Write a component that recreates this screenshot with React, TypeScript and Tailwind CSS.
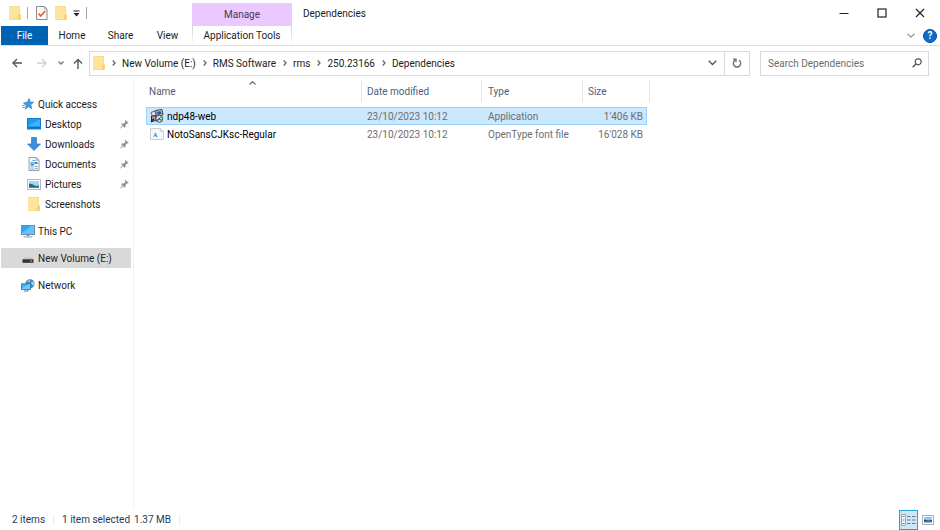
import { ReactNode } from "react";

const FolderIcon = () => (
  <svg width="12" height="14" viewBox="0 0 12 14">
    <path d="M0.5 0.5h10v8h1v5h-11z" fill="#ffe59a" stroke="#f3d47a" strokeWidth="0.8" />
    <path d="M9 9h2.5v4.500H9z" fill="#f6d070" />
    <path d="M1 1v12.4" stroke="#fbe9b0" strokeWidth="1" />
  </svg>
);

const PropertiesIcon = () => (
  <svg width="12" height="14" viewBox="0 0 12 14">
    <path d="M0.5 0.5h8l2.5 2.5v10.500h-10.500z" fill="#fafafa" stroke="#8a8a8a" />
    <path d="M8.500 0.500v2.500H11" fill="none" stroke="#9a9a9a" strokeWidth="0.8" />
    <path d="M2.500 7.500l2.200 2.500 4.500-5" fill="none" stroke="#e8622c" strokeWidth="1.700" />
  </svg>
);

const StarIcon = () => (
  <svg width="12" height="12" viewBox="0 0 12 12">
    <path
      d="M7.200 0.500l.8 3.500 3.700.2-2.900 2.300.9 4.300-3.300-2-3 2.400.8-3.700L1.500 5l3.700-.8z"
      fill="#3d9fe6"
      stroke="#2a83cf"
      strokeWidth="0.7"
    />
    <path d="M0 7.500h2.800M0.500 9.500h2.500" stroke="#5aaeea" strokeWidth="1" />
  </svg>
);

const DesktopIcon = () => (
  <svg width="14" height="12" viewBox="0 0 14 12">
    <rect x="0.5" y="0.5" width="13" height="10.500" fill="#1c9bf0" stroke="#1478c8" />
    <path d="M1 8L13 1v7z" fill="#3fb2fa" />
    <path d="M1 9.800h12" stroke="#1166ad" strokeWidth="1.200" />
  </svg>
);

const DownloadIcon = () => (
  <svg width="14" height="14" viewBox="0 0 14 14">
    <path d="M4.500 0.500h5v6.500h4L7 13.500 0.500 7h4z" fill="#3b8ede" stroke="#2c7acb" strokeWidth="0.7" />
  </svg>
);

const DocumentIcon = () => (
  <svg width="12" height="14" viewBox="0 0 12 14">
    <path d="M1 0.500h7.500L11 3v10.500H1z" fill="#f5f8fa" stroke="#8c9499" strokeWidth="0.9" />
    <path d="M8.300 0.500V3.200H11" fill="none" stroke="#8c9499" strokeWidth="0.8" />
    <path d="M4.500 3.500h3M2.500 5.500h3" stroke="#58a9dc" />
    <path d="M2.500 7.500h3.500M6.500 6h3" stroke="#2b8bd0" strokeWidth="1.800" />
    <path d="M2.500 10h3M6.500 9.500h3.200M2.500 12h3M6.500 11.700h3.200" stroke="#6f9fc0" strokeWidth="0.9" />
  </svg>
);

const PictureIcon = () => (
  <svg width="14" height="11" viewBox="0 0 14 11">
    <rect x="0.5" y="0.5" width="13" height="10" fill="#fff" stroke="#b4b8bb" />
    <rect x="2" y="2" width="10" height="7" fill="#a5d6f6" />
    <path d="M2 4.500q3 0 5 1.500t5 .5V9H2z" fill="#2d6779" />
    <path d="M2 7.800h10V9H2z" fill="#3d86c8" />
  </svg>
);

const ComputerIcon = () => (
  <svg width="14" height="13" viewBox="0 0 14 13">
    <rect x="0.5" y="0.5" width="13" height="9" fill="#2ea7f2" stroke="#6f8795" strokeWidth="0.9" />
    <path d="M1 8L10 1h3v8H1z" fill="#62c4fa" />
    <path d="M5.500 10h3v1.200h-3z" fill="#8b979e" />
    <path d="M2.500 11.900h9" stroke="#7aa9c8" strokeWidth="1.100" />
  </svg>
);

const DriveIcon = () => (
  <svg width="12" height="12" viewBox="0 0 12 12">
    <path d="M2 5.500h8l1.500 2h-11z" fill="#c3c6c8" />
    <rect x="0.500" y="7.300" width="11" height="3.500" fill="#333" />
    <rect x="8" y="8.500" width="2" height="1.100" fill="#45e05c" />
  </svg>
);

const NetworkIcon = () => (
  <svg width="14" height="13" viewBox="0 0 14 13">
    <circle cx="9" cy="4.800" r="4.600" fill="#3f87b5" />
    <path d="M6 2.500q2-2 3.500-1.800l-1 2.500zM10 3l2.500-.5q1 2 .5 4l-2-.5z" fill="#a2d2ec" />
    <rect x="0.500" y="4.800" width="9" height="5.700" fill="#3fb0f3" stroke="#2875a8" strokeWidth="0.8" />
    <path d="M1 9.500L8 5.300h1v4.700H1z" fill="#73cbfa" />
    <path d="M3 12h4.500" stroke="#4d8fb8" strokeWidth="1.200" />
  </svg>
);

const PinIcon = () => (
  <svg width="9" height="10" viewBox="0 0 9 10">
    <path d="M5 0.500L8.700 4l-1 .5-.6-.2-1.700 1.900.1 1.900-.8.600L1.200 5.200l.7-.8 2 .1 1.700-1.700-.6-1.100z" fill="#84929c" />
    <path d="M3 6.500L0.500 9.300" stroke="#84929c" />
  </svg>
);

const InstallerIcon = () => (
  <svg width="14" height="14" viewBox="0 0 14 14">
    <path d="M5.500 1.500l6.500-1 1 5.500-6.500 1.500z" fill="#c9ced0" stroke="#333" strokeWidth="0.9" />
    <path d="M7 2.800l4-.7.600 3-4 .8z" fill="#2b4fb0" />
    <path d="M9 2.500l2-.4.300 1.500z" fill="#35b5a5" />
    <path d="M1 3.500l4-1.500 1 4-3.500 1.500z" fill="#e5e5e5" stroke="#444" strokeWidth="0.8" />
    <path d="M1.500 7h4.500v4.500l-4.500 1z" fill="#aab2b6" stroke="#2a2a2a" />
    <path d="M1 13l3-3.500" stroke="#222" strokeWidth="1.300" />
    <circle cx="9.300" cy="9.800" r="3.500" fill="#dfe4e6" stroke="#444" strokeWidth="0.9" />
    <path d="M9.300 9.800l1.200-3 2 1.500z" fill="#3fbf57" />
    <path d="M9.300 9.800l3.200.5-1.500 2.400z" fill="#2fae6a" />
    <path d="M9.300 9.800l-3 .6 1.400 2z" fill="#3557c4" />
    <circle cx="9.300" cy="9.800" r="0.900" fill="#333" />
  </svg>
);

const FontFileIcon = () => (
  <svg width="14" height="12" viewBox="0 0 14 12">
    <path d="M0.500 0.500h10l3 3v8h-13z" fill="#f7f8fa" stroke="#cdd0d3" />
    <path d="M10.500 0.500v3h3" fill="none" stroke="#cdd0d3" />
    <text x="3" y="9" fontSize="6" fontWeight="bold" fontFamily="Liberation Serif, serif" fill="#3a62c5">
      A
    </text>
  </svg>
);

const Chevron = ({ d, w, h, color }: { d: string; w: number; h: number; color: string }) => (
  <svg width={w} height={h} viewBox={`0 0 ${w} ${h}`} fill="none" stroke={color} strokeWidth="1.300">
    <path d={d} />
  </svg>
);

interface NavItem {
  label: string;
  icon: ReactNode;
  child?: boolean;
  pinned?: boolean;
  selected?: boolean;
}

const navGroups: NavItem[][] = [
  [
    { label: "Quick access", icon: <StarIcon /> },
    { label: "Desktop", icon: <DesktopIcon />, child: true, pinned: true },
    { label: "Downloads", icon: <DownloadIcon />, child: true, pinned: true },
    { label: "Documents", icon: <DocumentIcon />, child: true, pinned: true },
    { label: "Pictures", icon: <PictureIcon />, child: true, pinned: true },
    { label: "Screenshots", icon: <FolderIcon />, child: true },
  ],
  [{ label: "This PC", icon: <ComputerIcon /> }],
  [{ label: "New Volume (E:)", icon: <DriveIcon />, selected: true }],
  [{ label: "Network", icon: <NetworkIcon /> }],
];

const path = ["New Volume (E:)", "RMS Software", "rms", "250.23166", "Dependencies"];

const files = [
  { name: "ndp48-web", date: "23/10/2023 10:12", type: "Application", size: "1'406 KB", icon: <InstallerIcon />, selected: true },
  { name: "NotoSansCJKsc-Regular", date: "23/10/2023 10:12", type: "OpenType font file", size: "16'028 KB", icon: <FontFileIcon />, selected: false },
];

const TitleBar = () => (
  <header className="flex h-[46px] border-b border-[#dfdfdf] pl-px">
    <div className="flex w-[191px] flex-col">
      <div className="flex h-[26px] items-center pl-2">
        <FolderIcon />
        <span className="ml-1.5 h-3 w-px bg-[#a5a5a5]" />
        <button aria-label="Properties" className="ml-2">
          <PropertiesIcon />
        </button>
        <button aria-label="New folder" className="ml-[7px]">
          <FolderIcon />
        </button>
        <button aria-label="Customize toolbar" className="ml-1.5">
          <svg width="7" height="7" viewBox="0 0 7 7">
            <path d="M0.500 1h6" stroke="#222" />
            <path d="M0.500 3h6l-3 3.500z" fill="#222" />
          </svg>
        </button>
        <span className="ml-1.5 h-3 w-px bg-[#a5a5a5]" />
      </div>
      <nav className="flex h-[19px] items-center">
        <button className="h-full w-[47px] bg-[#0063b1] text-white">File</button>
        <button className="w-12">Home</button>
        <button className="w-[49px]">Share</button>
        <button className="w-[45px]">View</button>
      </nav>
    </div>
    <div className="flex w-[100px] flex-col pt-[3px] text-center">
      <div className="flex h-[23px] items-center justify-center bg-[#e9c9ff] text-[#4b3a5c]">Manage</div>
      <div className="flex h-[19px]">
        <span className="w-px bg-linear-to-b from-[#cfcfcf] to-white" />
        <button className="flex-1">Application Tools</button>
        <span className="w-px bg-linear-to-b from-[#cfcfcf] to-white" />
      </div>
    </div>
    <h1 className="flex h-[26px] flex-1 items-center pl-[11px]">Dependencies</h1>
    <div className="flex flex-col items-end">
      <div className="flex h-[26px] items-center gap-7 pr-[15px]">
        <button aria-label="Minimize">
          <svg width="10" height="10" stroke="#222">
            <path d="M0.500 5.500h9" />
          </svg>
        </button>
        <button aria-label="Maximize">
          <svg width="10" height="10" stroke="#222" fill="none">
            <rect x="1" y="1" width="8" height="8" strokeWidth="1.200" />
          </svg>
        </button>
        <button aria-label="Close">
          <svg width="10" height="10" stroke="#222">
            <path d="M1 1l8 8M9 1L1 9" strokeWidth="1.200" />
          </svg>
        </button>
      </div>
      <div className="flex h-[19px] items-center gap-2 pr-[3px]">
        <button aria-label="Expand the ribbon">
          <Chevron d="M0.500 0.700L4 4l3.500-3.300" w={8} h={5} color="#a0a0a0" />
        </button>
        <button
          aria-label="Help"
          className="flex size-[14px] items-center justify-center rounded-full border border-[#0a4f9a] bg-[#0a6cce] font-bold text-white"
        >
          ?
        </button>
      </div>
    </div>
  </header>
);

const AddressBar = () => (
  <div className="flex h-[34px] items-center pr-[11px] pl-3">
    <div className="flex w-[77px] items-center">
      <button aria-label="Back">
        <svg width="10" height="10" fill="none" stroke="#555" strokeWidth="1.400">
          <path d="M10 5H1M5 1L1 5l4 4" />
        </svg>
      </button>
      <button aria-label="Forward" className="ml-[15px]">
        <svg width="10" height="10" fill="none" stroke="#cfcfcf" strokeWidth="1.300">
          <path d="M0 5h9M5 1l4 4-4 4" />
        </svg>
      </button>
      <button aria-label="Recent locations" className="ml-[11px]">
        <Chevron d="M0.500 0.500L3 3l2.500-2.500" w={6} h={4} color="#777" />
      </button>
      <button aria-label="Up" className="ml-[9px]">
        <svg width="10" height="11" fill="none" stroke="#555" strokeWidth="1.400">
          <path d="M5 11V1.500M1 5.500l4-4 4 4" />
        </svg>
      </button>
    </div>
    <div className="flex h-[25px] flex-1 items-center border border-[#d9d9d9]">
      <span className="ml-[3px]">
        <FolderIcon />
      </span>
      <ol className="flex flex-1 items-center">
        {path.map((part) => (
          <li key={part} className="flex items-center">
            <span className="mr-1.5 ml-[7px]">
              <Chevron d="M0.700 0.500L3 3 0.700 5.500" w={4} h={6} color="#666" />
            </span>
            <a href="#">{part}</a>
          </li>
        ))}
      </ol>
      <button aria-label="Previous locations" className="mr-[7px]">
        <Chevron d="M0.700 0.700L4.500 4.500l3.800-3.800" w={9} h={6} color="#555" />
      </button>
      <button aria-label="Refresh" className="flex h-full w-[25px] items-center justify-center border-l border-[#d9d9d9]">
        <svg width="10" height="10" fill="none" stroke="#666" strokeWidth="1.300">
          <path d="M7 2.200A3.700 3.700 0 1 1 3 2.200M1 1.200h3v3" />
        </svg>
      </button>
    </div>
    <div className="ml-[10px] flex h-[25px] w-[169px] items-center border border-[#d9d9d9] pr-1.5 pl-[7px]">
      <input
        type="text"
        aria-label="Search Dependencies"
        placeholder="Search Dependencies"
        className="min-w-0 flex-1 outline-none placeholder:text-[#6d6d6d]"
      />
      <svg width="10" height="10" fill="none" stroke="#555" strokeWidth="1.200">
        <circle cx="6.200" cy="3.800" r="3" />
        <path d="M4 6L0.700 9.300" strokeWidth="1.500" />
      </svg>
    </div>
  </div>
);

const Sidebar = () => (
  <nav className="flex w-[134px] flex-col gap-[7px] border-r border-[#f2f2f2] pt-[14px] pr-0.5 pl-px">
    {navGroups.map((group) => (
      <ul key={group[0].label}>
        {group.map((item) => (
          <li key={item.label}>
            <a
              href="#"
              className={`flex h-5 items-center pr-0.5 ${item.child ? "pl-[26px]" : "pl-5"} ${
                item.selected ? "bg-[#d9d9d9]" : ""
              }`}
            >
              <span className="flex w-[14px] justify-center">{item.icon}</span>
              <span className={`flex-1 whitespace-nowrap ${item.child ? "ml-1" : "ml-[3px]"}`}>{item.label}</span>
              {item.pinned && <PinIcon />}
            </a>
          </li>
        ))}
      </ul>
    ))}
  </nav>
);

const FileList = () => (
  <main className="flex-1 pl-3">
    <table className="w-[504px] table-fixed border-separate border-spacing-0 text-left">
      <colgroup>
        <col className="w-[216px]" />
        <col className="w-[120px]" />
        <col className="w-[101px]" />
        <col className="w-16" />
        <col className="w-[3px]" />
      </colgroup>
      <thead className="text-[#4c607a]">
        <tr className="h-[22px]">
          <th className="relative border-r border-[#e5e5e5] pl-[3px] font-normal">
            Name
            <span className="absolute top-px left-[103px]">
              <Chevron d="M0.500 3.500L3.500 0.700l3 2.800" w={7} h={4} color="#777" />
            </span>
          </th>
          <th className="border-r border-[#e5e5e5] pl-[5px] font-normal">Date modified</th>
          <th className="border-r border-[#e5e5e5] pl-1.5 font-normal">Type</th>
          <th className="pl-[5px] font-normal">Size</th>
          <td className="border-r border-[#e5e5e5]" />
        </tr>
      </thead>
      <tbody className="text-[#6d6d6d]">
        <tr className="h-[5px]">
          <td colSpan={5} />
        </tr>
        {files.map((file) => {
          const cell = file.selected ? "border-y border-[#99d1ff] bg-[#cce8ff]" : "";
          return (
            <tr key={file.name} className="h-[18px]">
              <td className={`${cell} text-black ${file.selected ? "border-l pl-[3px]" : "pl-1"}`}>
                <span className="flex items-center gap-[3px]">
                  {file.icon}
                  {file.name}
                </span>
              </td>
              <td className={`${cell} pl-[5px]`}>{file.date}</td>
              <td className={`${cell} pl-1.5`}>{file.type}</td>
              <td className={`${cell} text-right ${file.selected ? "border-r pr-[3px]" : "pr-1"}`}>{file.size}</td>
              <td />
            </tr>
          );
        })}
      </tbody>
    </table>
  </main>
);

const StatusBar = () => (
  <footer className="flex h-[21px] items-center pr-1.5 pl-3 text-[#1e395b]">
    <span>2 items</span>
    <span className="mx-2 h-2.5 w-px bg-[#ececec]" />
    <span>1 item selected</span>
    <span className="ml-1">1.37 MB</span>
    <span className="ml-2 h-2.5 w-px bg-[#ececec]" />
    <div className="ml-auto flex items-center gap-1">
      <button
        aria-label="Details view"
        className="flex h-5 w-[19px] items-center justify-center border border-[#26a0da] bg-[#cbe8f6]"
      >
        <svg width="15" height="12" viewBox="0 0 15 12">
          <rect x="0.500" y="0.500" width="4" height="11" fill="#f4f4f4" stroke="#999" strokeWidth="0.800" />
          <path d="M1.500 2.500h2M1.500 6h2" stroke="#888" />
          <path d="M1.500 9.500h2" stroke="#e0503c" />
          <path d="M6 2.500h3.500M6 6h3.500M6 9.500h3.500M11 2.500h3.500M11 6h3.500M11 9.500h3.500" stroke="#6d7780" />
        </svg>
      </button>
      <button aria-label="Large icons view">
        <svg width="12" height="10" viewBox="0 0 12 10">
          <rect x="0.500" y="0.500" width="11" height="9" fill="#fff" stroke="#b0b0b0" />
          <rect x="2" y="2" width="8" height="6" fill="#8cc4f5" />
          <path d="M2 4.500l4 1 4-.5v1.800H2z" fill="#28506c" />
        </svg>
      </button>
    </div>
  </footer>
);

const App = () => {
  return (
    <div className="flex h-screen flex-col bg-white font-['Roboto','Open_Sans',sans-serif] text-[10px] leading-[15px] text-[#1c1c1c]">
      <TitleBar />
      <AddressBar />
      <div className="flex min-h-0 flex-1">
        <Sidebar />
        <FileList />
      </div>
      <StatusBar />
    </div>
  );
};

export default App;
